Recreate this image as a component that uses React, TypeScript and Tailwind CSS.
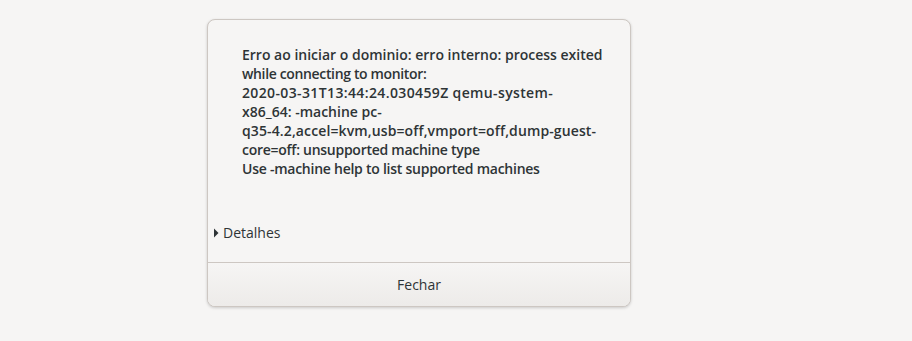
export default function App() {
  const lines: [string, string][] = [
    ['Erro ao iniciar o dominio: erro interno: process exited', 'tracking-[0px]'],
    ['while connecting to monitor:', 'tracking-[-0.35px]'],
    ['2020-03-31T13:44:24.030459Z qemu-system-', 'tracking-[0.37px]'],
    ['x86_64: -machine pc-', 'tracking-[0px]'],
    ['q35-4.2,accel=kvm,usb=off,vmport=off,dump-guest-', 'tracking-[0.12px]'],
    ['core=off: unsupported machine type', 'tracking-[-0.27px]'],
    ['Use -machine help to list supported machines', 'tracking-[-0.25px]'],
  ]

  return (
    <div className="w-[912px] h-[341px] bg-[#f6f5f4] pt-[19px] pl-[207px] text-[#2e3436] [font-family:'Open_Sans',sans-serif]">
      <div className="w-[424px] h-[288px] rounded-[8px] border border-[#cdc7c2] bg-[#f6f5f4] shadow-[0_1px_3px_rgba(0,0,0,0.18)] flex flex-col overflow-hidden">
        <div className="pl-[34px] pt-[25px] text-[14px] leading-[19px]">
          {lines.map(([l, t]) => (
            <div key={l} className={`font-semibold whitespace-nowrap ${t}`}>{l}</div>
          ))}
        </div>
        <div className="mt-[45px] h-[19px] pl-[5px] flex items-center gap-[4px] text-[14px]">
          <svg width="6" height="10" viewBox="0 0 6 10" className="shrink-0">
            <path d="M1 0.5 L5.5 5 L1 9.5 Z" fill="#2e3436" />
          </svg>
          <span>Detalhes</span>
        </div>
        <div className="flex-1" />
        <button className="h-[44px] border-t border-[#cdc7c2] bg-gradient-to-b from-[#f6f5f4] to-[#edebe9] text-[14px] text-[#2e3436]">
          Fechar
        </button>
      </div>
    </div>
  )
}
